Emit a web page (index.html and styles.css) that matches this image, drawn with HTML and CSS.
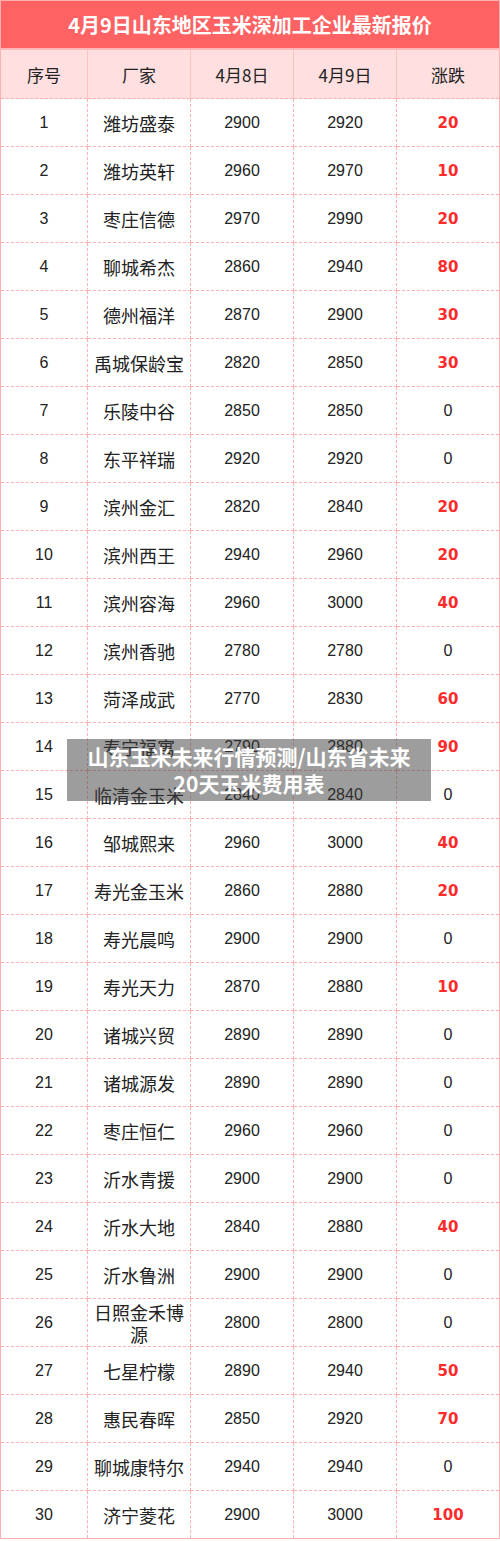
FILE: index.html
```html
<!DOCTYPE html>
<html lang="zh">
<head>
<meta charset="utf-8">
<link rel="stylesheet" href="styles.css">
</head>
<body>
<div class="page">
  <table class="price">
    <colgroup>
      <col class="c-no"><col class="c-name"><col class="c-d"><col class="c-d"><col class="c-d">
    </colgroup>
    <thead>
      <tr class="title"><th colspan="5">4月9日山东地区玉米深加工企业最新报价</th></tr>
      <tr class="head"><th>序号</th><th>厂家</th><th>4月8日</th><th>4月9日</th><th>涨跌</th></tr>
    </thead>
    <tbody>
      <tr><td>1</td><td class="n">潍坊盛泰</td><td>2900</td><td>2920</td><td class="up">20</td></tr>
      <tr><td>2</td><td class="n">潍坊英轩</td><td>2960</td><td>2970</td><td class="up">10</td></tr>
      <tr><td>3</td><td class="n">枣庄信德</td><td>2970</td><td>2990</td><td class="up">20</td></tr>
      <tr><td>4</td><td class="n">聊城希杰</td><td>2860</td><td>2940</td><td class="up">80</td></tr>
      <tr><td>5</td><td class="n">德州福洋</td><td>2870</td><td>2900</td><td class="up">30</td></tr>
      <tr><td>6</td><td class="n">禹城保龄宝</td><td>2820</td><td>2850</td><td class="up">30</td></tr>
      <tr><td>7</td><td class="n">乐陵中谷</td><td>2850</td><td>2850</td><td>0</td></tr>
      <tr><td>8</td><td class="n">东平祥瑞</td><td>2920</td><td>2920</td><td>0</td></tr>
      <tr><td>9</td><td class="n">滨州金汇</td><td>2820</td><td>2840</td><td class="up">20</td></tr>
      <tr><td>10</td><td class="n">滨州西王</td><td>2940</td><td>2960</td><td class="up">20</td></tr>
      <tr><td>11</td><td class="n">滨州容海</td><td>2960</td><td>3000</td><td class="up">40</td></tr>
      <tr><td>12</td><td class="n">滨州香驰</td><td>2780</td><td>2780</td><td>0</td></tr>
      <tr><td>13</td><td class="n">菏泽成武</td><td>2770</td><td>2830</td><td class="up">60</td></tr>
      <tr><td>14</td><td class="n">寿宁福寓</td><td>2790</td><td>2880</td><td class="up">90</td></tr>
      <tr><td>15</td><td class="n">临清金玉米</td><td>2840</td><td>2840</td><td>0</td></tr>
      <tr><td>16</td><td class="n">邹城熙来</td><td>2960</td><td>3000</td><td class="up">40</td></tr>
      <tr><td>17</td><td class="n">寿光金玉米</td><td>2860</td><td>2880</td><td class="up">20</td></tr>
      <tr><td>18</td><td class="n">寿光晨鸣</td><td>2900</td><td>2900</td><td>0</td></tr>
      <tr><td>19</td><td class="n">寿光天力</td><td>2870</td><td>2880</td><td class="up">10</td></tr>
      <tr><td>20</td><td class="n">诸城兴贸</td><td>2890</td><td>2890</td><td>0</td></tr>
      <tr><td>21</td><td class="n">诸城源发</td><td>2890</td><td>2890</td><td>0</td></tr>
      <tr><td>22</td><td class="n">枣庄恒仁</td><td>2960</td><td>2960</td><td>0</td></tr>
      <tr><td>23</td><td class="n">沂水青援</td><td>2900</td><td>2900</td><td>0</td></tr>
      <tr><td>24</td><td class="n">沂水大地</td><td>2840</td><td>2880</td><td class="up">40</td></tr>
      <tr><td>25</td><td class="n">沂水鲁洲</td><td>2900</td><td>2900</td><td>0</td></tr>
      <tr><td>26</td><td class="n">日照金禾博源</td><td>2800</td><td>2800</td><td>0</td></tr>
      <tr><td>27</td><td class="n">七星柠檬</td><td>2890</td><td>2940</td><td class="up">50</td></tr>
      <tr><td>28</td><td class="n">惠民春晖</td><td>2850</td><td>2920</td><td class="up">70</td></tr>
      <tr><td>29</td><td class="n">聊城康特尔</td><td>2940</td><td>2940</td><td>0</td></tr>
      <tr><td>30</td><td class="n">济宁菱花</td><td>2900</td><td>3000</td><td class="up">100</td></tr>
    </tbody>
  </table>
  <div class="caption">山东玉米未来行情预测/山东省未来<br>20天玉米费用表</div>
</div>
</body>
</html>
```
FILE: styles.css
```css
html, body {
  margin: 0;
  padding: 0;
  background: #ffffff;
}
.page {
  position: relative;
  width: 500px;
  height: 1541px;
  overflow: hidden;
}
.price {
  width: 500px;
  border-collapse: collapse;
  table-layout: fixed;
  border: 1px solid #ffb0b0;
  font-family: "Liberation Sans", "Noto Sans CJK SC", sans-serif;
  color: #222;
}
.c-no { width: 87px; }
.c-name { width: 103px; }
.c-d { width: 103px; }
.title th {
  height: 47px;
  padding: 0;
  background: #ff6262;
  color: #fff;
  font-family: "Noto Sans CJK SC", sans-serif;
  font-weight: bold;
  font-size: 20px;
  border-bottom: 2px solid #ffb8b8;
}
.head th {
  height: 48px;
  padding: 0;
  background: #ffdfdf;
  font-family: "Noto Sans CJK SC", sans-serif;
  font-weight: normal;
  font-size: 17px;
  color: #222;
  border-left: 1px solid #ffc2c2;
  border-bottom: 1px dashed #ffb0b0;
}
.head th:first-child { border-left: none; }
.price td {
  height: 47px;
  padding: 0;
  text-align: center;
  font-size: 16px;
  border: 1px dashed #ffb0b0;
  line-height: 22px;
}
.price td.n {
  font-family: "Noto Sans CJK SC", sans-serif;
  font-size: 18px;
  padding: 0 4px;
}
.price td.up {
  color: #ff2a2a;
  font-weight: bold;
  font-family: "DejaVu Sans", sans-serif;
  font-size: 15px;
}
.caption {
  position: absolute;
  left: 67px;
  top: 739px;
  width: 364px;
  height: 62px;
  background: rgba(60, 60, 60, 0.5);
  color: #fff;
  font-family: "Noto Sans CJK SC", sans-serif;
  font-weight: bold;
  font-size: 21px;
  line-height: 27px;
  text-align: center;
  padding-top: 4px;
  box-sizing: border-box;
}
```
